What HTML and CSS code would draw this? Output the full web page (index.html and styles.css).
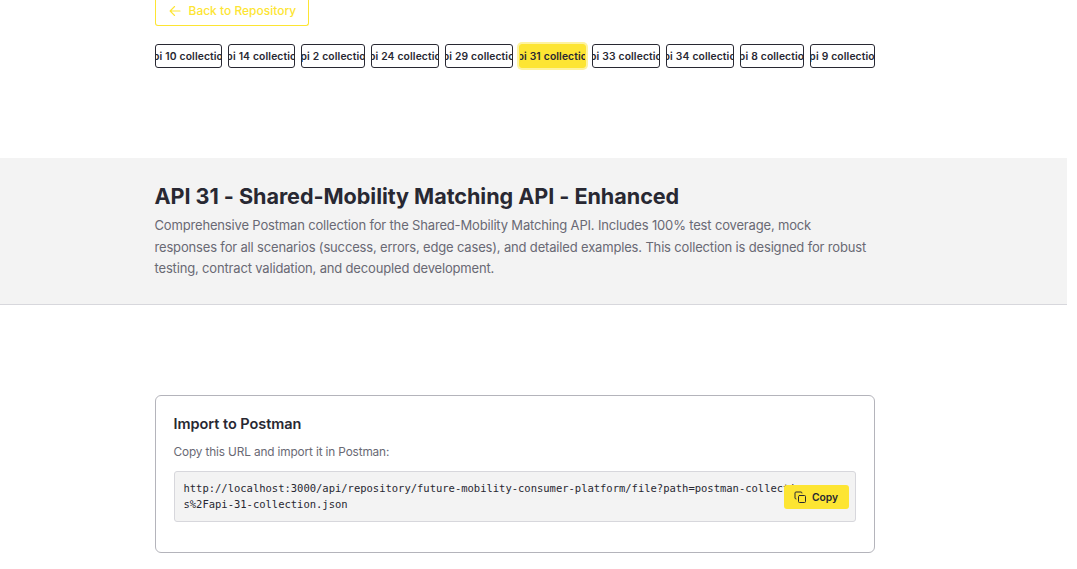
FILE: index.html
```html
<!DOCTYPE html>
<html lang="en">
<head>
<meta charset="utf-8">
<title>API 31 - Shared-Mobility Matching API</title>
<link rel="stylesheet" href="styles.css">
</head>
<body>
<main class="page">
  <nav class="top">
    <a class="back"><svg class="back-icon" viewBox="0 0 12 12"><path d="M11 6H1.3M5.6 1.5 1.1 6l4.5 4.5"/></svg><span>Back to Repository</span></a>
    <div class="tabs">
      <a class="tab tab-narrow"><span>api 10 collection</span></a>
      <a class="tab tab-narrow"><span>api 14 collection</span></a>
      <a class="tab tab-short"><span>api 2 collection</span></a>
      <a class="tab"><span>api 24 collection</span></a>
      <a class="tab"><span>api 29 collection</span></a>
      <a class="tab tab-active"><span>api 31 collection</span></a>
      <a class="tab"><span>api 33 collection</span></a>
      <a class="tab"><span>api 34 collection</span></a>
      <a class="tab tab-short"><span>api 8 collection</span></a>
      <a class="tab tab-last"><span>api 9 collection</span></a>
    </div>
  </nav>
  <header class="hero">
    <div class="container">
      <h1 class="title">API 31 - Shared-Mobility Matching API - Enhanced</h1>
      <p class="description">Comprehensive Postman collection for the Shared-Mobility Matching API. Includes 100% test coverage, mock<br>responses for all scenarios (success, errors, edge cases), and detailed examples. This collection is designed for robust<br>testing, contract validation, and decoupled development.</p>
    </div>
  </header>
  <section class="card">
    <h2 class="card-title">Import to Postman</h2>
    <p class="card-text">Copy this URL and import it in Postman:</p>
    <div class="url-box">
      <code class="url">http://localhost:3000/api/repository/future-mobility-consumer-platform/file?path=postman-collection<br>s%2Fapi-31-collection.json</code>
      <button class="copy"><svg class="copy-icon" viewBox="0 0 24 24"><rect x="9" y="9" width="14" height="14" rx="2"/><path d="M4 16a2 2 0 0 1-2-2V4a2 2 0 0 1 2-2h10a2 2 0 0 1 2 2"/></svg><span>Copy</span></button>
    </div>
  </section>
</main>
</body>
</html>
```
FILE: styles.css
```css
* { box-sizing: border-box; }
body {
  margin: 0;
  height: 569px;
  overflow: hidden;
  background: #fff;
  color: #282832;
  font-family: Inter, "Liberation Sans", sans-serif;
}
h1, h2, p { margin: 0; }
.page { width: 1067px; }
.top {
  width: 720px;
  height: 158px;
  margin-left: 154.5px;
}
.back {
  display: flex;
  align-items: center;
  gap: 7.5px;
  width: 154px;
  height: 26px;
  padding: 0 0 4px 13.5px;
  border: 1px solid #fde533;
  border-top: 0;
  border-radius: 0 0 3px 3px;
  color: #fde533;
  font-size: 12px;
  font-weight: 500;
  white-space: nowrap;
}
.back-icon {
  width: 12px;
  height: 12px;
  flex: none;
  fill: none;
  stroke: currentColor;
  stroke-width: 1.1;
  stroke-linecap: round;
  stroke-linejoin: round;
}
.tabs {
  display: flex;
  gap: 6px;
  margin-top: 18px;
}
.tab {
  display: flex;
  flex: none;
  width: 67.7px;
  align-items: center;
  justify-content: center;
  height: 24px;
  overflow: hidden;
  border: 1px solid #282832;
  border-radius: 3px;
  font-size: 10.3px;
  font-weight: 600;
  letter-spacing: 0.12px;
  word-spacing: 0.2px;
  white-space: nowrap;
}
.tab-narrow { width: 67.4px; }
.tab-short { width: 64px; }
.tab-last { width: 65px; }
.tab-active {
  border-color: #fde533;
  background: #fde533;
  box-shadow: 0 0 0 2px #fef3a0;
}
.hero {
  height: 147px;
  padding-top: 24px;
  border-bottom: 1px solid #d7d7dc;
  background: #f3f3f3;
}
.container { width: 720px; margin-left: 154.5px; white-space: nowrap; }
.title {
  font-size: 21.6px;
  line-height: 28px;
  font-weight: 700;
  letter-spacing: -0.05px;
}
.description {
  margin-top: 5px;
  color: #696974;
  font-size: 13px;
  line-height: 21.6px;
  letter-spacing: -0.165px;
}
.card {
  width: 720px;
  height: 158px;
  margin: 90px 0 0 154.5px;
  padding: 18px;
  border: 1px solid #b4b4bb;
  border-radius: 6px;
}
.card-title {
  font-size: 14.5px;
  line-height: 20px;
  font-weight: 600;
  letter-spacing: -0.04px;
}
.card-text {
  margin-top: 9px;
  color: #696974;
  font-size: 11.8px;
  line-height: 18px;
  letter-spacing: -0.13px;
}
.url-box {
  position: relative;
  height: 51px;
  margin-top: 10px;
  padding: 8px 9px;
  border: 1px solid #d7d7dc;
  border-radius: 3px;
  background: #f3f3f3;
}
.url {
  display: block;
  font-family: "DejaVu Sans Mono", monospace;
  font-size: 10.5px;
  line-height: 16px;
  letter-spacing: -0.01px;
  white-space: nowrap;
}
.copy {
  position: absolute;
  top: 13px;
  right: 6px;
  display: flex;
  align-items: center;
  gap: 6.5px;
  width: 65px;
  height: 24px;
  padding: 0 0 0 10px;
  border: 0;
  border-radius: 3px;
  background: #fde533;
  color: #282832;
  font: 600 10.3px Inter, sans-serif;
}
.copy-icon {
  width: 12px;
  height: 12px;
  flex: none;
  fill: none;
  stroke: currentColor;
  stroke-width: 2;
  stroke-linecap: round;
  stroke-linejoin: round;
}
```
